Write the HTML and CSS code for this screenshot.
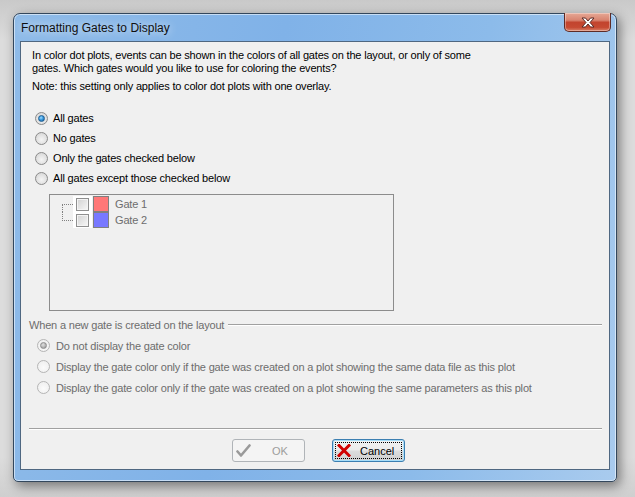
FILE: index.html
```html
<!DOCTYPE html>
<html>
<head>
<meta charset="utf-8">
<link rel="stylesheet" href="styles.css">
</head>
<body>
<div class="desk">
  <div class="window">
    <div class="titlebar">
      <span class="title">Formatting Gates to Display</span>
      <div class="close">
        <svg width="14" height="11" viewBox="0 0 14 11"><path d="M1 1 H4.5 L7 4 L9.5 1 H13 L9 5.5 L13 10 H9.5 L7 7 L4.5 10 H1 L5 5.5 Z" fill="#fff" stroke="#5a2a26" stroke-width="1" stroke-linejoin="round"/></svg>
      </div>
    </div>
    <div class="client">
      <p class="intro">In color dot plots, events can be shown in the colors of all gates on the layout, or only of some<br>gates. Which gates would you like to use for coloring the events?</p>
      <p class="note">Note: this setting only applies to color dot plots with one overlay.</p>

      <div class="radios main-radios">
        <div class="radio-row"><span class="rb checked"></span><span>All gates</span></div>
        <div class="radio-row"><span class="rb"></span><span>No gates</span></div>
        <div class="radio-row"><span class="rb"></span><span>Only the gates checked below</span></div>
        <div class="radio-row"><span class="rb"></span><span>All gates except those checked below</span></div>
      </div>

      <div class="tree">
        <div class="tree-row">
          <div class="conn"><div class="conn-first"></div></div>
          <div class="state"><span class="cb"></span></div>
          <span class="swatch swatch-red"></span>
          <span class="tree-label">Gate 1</span>
        </div>
        <div class="tree-row">
          <div class="conn"><div class="conn-last"></div></div>
          <div class="state"><span class="cb"></span></div>
          <span class="swatch swatch-blue"></span>
          <span class="tree-label">Gate 2</span>
        </div>
      </div>

      <div class="group">
        <div class="group-head"><span>When a new gate is created on the layout</span><span class="rule"></span></div>
        <div class="radios group-radios">
          <div class="radio-row"><span class="rb disabled checked"></span><span>Do not display the gate color</span></div>
          <div class="radio-row"><span class="rb disabled"></span><span>Display the gate color only if the gate was created on a plot showing the same data file as this plot</span></div>
          <div class="radio-row"><span class="rb disabled"></span><span>Display the gate color only if the gate was created on a plot showing the same parameters as this plot</span></div>
        </div>
      </div>

      <div class="sep"></div>

      <div class="buttons">
        <div class="btn btn-disabled">
          <svg class="btn-icon" width="15" height="14" viewBox="0 0 15 14"><path d="M1.5 7.5 L5 11.5 L13.5 1.5" fill="none" stroke="#9a9a9a" stroke-width="2.6" stroke-linecap="round" stroke-linejoin="round"/></svg>
          <span class="btn-text">OK</span>
        </div>
        <div class="btn btn-focus">
          <div class="focus-rect">
            <svg class="btn-icon" width="14" height="13" viewBox="0 0 14 13"><path d="M2 1.5 L12 11.5 M12 1.5 L2 11.5" fill="none" stroke="#d10000" stroke-width="3" stroke-linecap="square"/></svg>
            <span class="btn-text">Cancel</span>
          </div>
        </div>
      </div>
    </div>
  </div>
</div>
</body>
</html>
```

FILE: styles.css
```css
html, body {
  margin: 0;
  padding: 0;
}
body {
  width: 635px;
  height: 497px;
  overflow: hidden;
  background: linear-gradient(#c9c9c9, #dcdcdc 8%, #dcdcdc 92%, #cfcfcf);
  font-family: "Liberation Sans", Arial, sans-serif;
  font-size: 11px;
  letter-spacing: -0.18px;
  color: #000;
}
.desk {
  padding: 13px 0 0 13px;
}
.window {
  width: 590px;
  height: 462px;
  padding: 0 6px 5px 6px;
  border: 1px solid #33475c;
  border-radius: 7px 7px 5px 5px;
  background: linear-gradient(100deg, #8fbbe8 0%, #80b2e8 40%, #8cbbea 70%, #a9cbee 100%);
  box-shadow: inset 0 0 0 1px rgba(255,255,255,0.55), 3px 4px 12px rgba(0,0,0,0.45);
}
.titlebar {
  height: 27px;
  display: flex;
  align-items: flex-start;
  justify-content: space-between;
}
.title {
  font-family: "Liberation Sans", Arial, sans-serif;
  font-size: 12px;
  letter-spacing: 0;
  color: #101010;
  padding: 7px 0 0 1px;
  text-shadow: 0 0 8px rgba(255,255,255,0.9);
}
.close {
  width: 45px;
  height: 18px;
  margin: -1px -1px 0 0;
  border: 1px solid #5e2b26;
  border-top: none;
  border-radius: 0 0 5px 5px;
  background: linear-gradient(#e6a895 0%, #d98470 40%, #c2442e 52%, #c64a32 80%, #d9826a 100%);
  box-shadow: inset 0 0 0 1px rgba(255,255,255,0.35);
  display: flex;
  align-items: center;
  justify-content: center;
}
.client {
  height: 427px;
  border: 1px solid #4f6781;
  background: #f0f0f0;
}
p {
  margin: 0;
  line-height: 13px;
}
.intro {
  padding: 7px 0 0 11px;
}
.note {
  margin-top: 5px;
  padding-left: 11px;
}
.radios {
  display: flex;
  flex-direction: column;
}
.main-radios {
  margin: 15px 0 0 14px;
}
.main-radios .radio-row {
  height: 20px;
  gap: 5px;
}
.radio-row {
  display: flex;
  align-items: center;
  white-space: nowrap;
}
.rb {
  width: 11px;
  height: 11px;
  border: 1px solid #8a8a8a;
  border-radius: 50%;
  background: radial-gradient(circle at 50% 60%, #f4f4f4 0%, #dcdcdc 70%, #cfcfcf 100%);
  display: flex;
  align-items: center;
  justify-content: center;
  flex: none;
}
.rb.checked::after {
  content: "";
  width: 5px;
  height: 5px;
  border-radius: 50%;
  border: 1px solid #1f5f93;
  background: radial-gradient(circle at 40% 35%, #9fdcff 0%, #3b9be0 45%, #11548f 100%);
}
.rb.disabled {
  border-color: #b5b5b5;
  background: radial-gradient(circle at 50% 60%, #fbfbfb 0%, #ececec 100%);
}
.rb.disabled.checked::after {
  border-color: #8e8e8e;
  background: radial-gradient(circle at 40% 35%, #e0e0e0 0%, #b0b0b0 60%, #8a8a8a 100%);
}
.tree {
  margin: 6px 0 0 28px;
  width: 343px;
  height: 115px;
  border: 1px solid #8c8c8c;
  background: #f0f0f0;
}
.tree-row {
  height: 16px;
  display: flex;
  align-items: stretch;
}
.tree-row:first-child {
  margin-top: 1px;
}
.conn {
  width: 11px;
  margin-left: 12px;
  display: flex;
  flex-direction: column;
}
.conn-first {
  margin-top: 8px;
  flex: 1;
  border-left: 1px dotted #808080;
  border-top: 1px dotted #808080;
}
.conn-last {
  height: 8px;
  border-left: 1px dotted #808080;
  border-bottom: 1px dotted #808080;
}
.state {
  width: 19px;
  background: #fff;
  display: flex;
  align-items: center;
  justify-content: center;
}
.cb {
  width: 11px;
  height: 11px;
  border: 1px solid #8f8f8f;
  background: linear-gradient(135deg, #d2d2d2, #f8f8f8);
  box-shadow: inset 0 0 0 1px #f4f4f4;
}
.swatch {
  width: 14px;
  height: 14px;
  margin-left: 1px;
  border: 1px solid #808080;
}
.swatch-red { background: #ff7878; }
.swatch-blue { background: #7878ff; }
.tree-label {
  margin-left: 6px;
  color: #6d6d6d;
  line-height: 16px;
}
.group {
  margin: 7px 7px 0 8px;
  color: #6d6d6d;
}
.group-head {
  height: 14px;
  display: flex;
  align-items: center;
  gap: 4px;
  white-space: nowrap;
}
.rule {
  flex: 1;
  height: 0;
  border-top: 1px solid #a0a0a0;
  border-bottom: 1px solid #fff;
}
.group-radios {
  margin: 3px 0 0 8px;
}
.group-radios .radio-row {
  height: 21px;
  gap: 6px;
}
.sep {
  margin: 30px 7px 0 8px;
  border-top: 1px solid #a0a0a0;
  border-bottom: 1px solid #fff;
}
.buttons {
  margin: 9px 0 0 211px;
  display: flex;
  gap: 27px;
}
.btn {
  width: 71px;
  height: 21px;
  border-radius: 3px;
  display: flex;
  align-items: center;
  letter-spacing: 0;
}
.btn-disabled {
  border: 1px solid #b0b4b8;
  background: #f4f4f4;
}
.btn-disabled .btn-icon {
  margin-left: 3px;
}
.btn-disabled .btn-text {
  margin-left: 21px;
  color: #9c9c9c;
}
.btn-focus {
  border: 1px solid #3c7fb1;
  background: linear-gradient(#f2f2f2 0%, #ebebeb 48%, #dddddd 52%, #cfcfcf 100%);
  box-shadow: inset 0 0 0 1px #a8def9;
  justify-content: center;
}
.focus-rect {
  width: 65px;
  height: 15px;
  border: 1px dotted #000;
  display: flex;
  align-items: center;
}
.focus-rect .btn-icon {
  margin-left: 1px;
}
.focus-rect .btn-text {
  margin-left: 9px;
}
```
